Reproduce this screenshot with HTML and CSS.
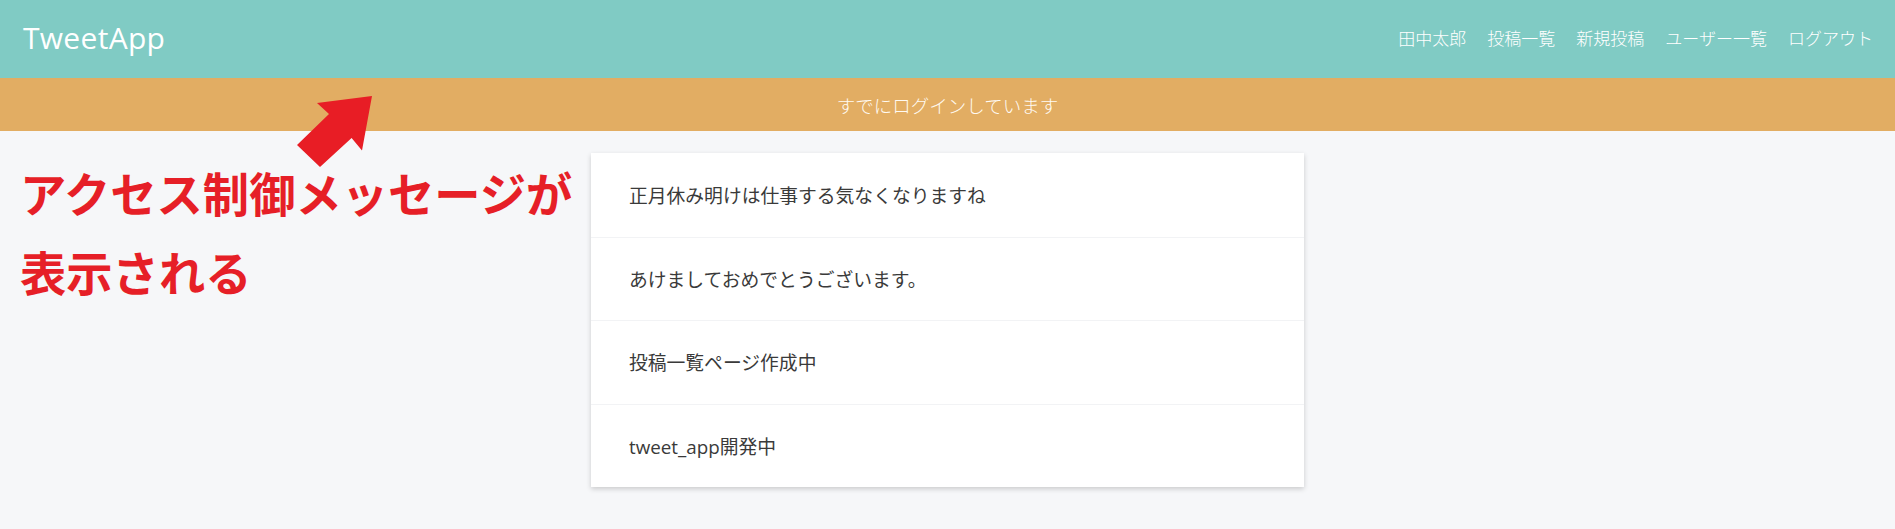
FILE: index.html
```html
<!DOCTYPE html>
<html lang="ja">
<head>
<meta charset="utf-8">
<title>TweetApp</title>
<link rel="stylesheet" href="styles.css">
</head>
<body>
<header class="header">
  <div class="logo">TweetApp</div>
  <nav class="nav">
    <a class="nav-link" href="#">田中太郎</a>
    <a class="nav-link" href="#">投稿一覧</a>
    <a class="nav-link" href="#">新規投稿</a>
    <a class="nav-link" href="#">ユーザー一覧</a>
    <a class="nav-link" href="#">ログアウト</a>
  </nav>
</header>
<div class="flash">すでにログインしています</div>
<main class="main">
  <div class="posts">
    <div class="post">正月休み明けは仕事する気なくなりますね</div>
    <div class="post">あけましておめでとうございます。</div>
    <div class="post">投稿一覧ページ作成中</div>
    <div class="post">tweet_app開発中</div>
  </div>
</main>
<div class="annotation">アクセス制御メッセージが<br>表示される</div>
<svg class="arrow" width="1895" height="529" viewBox="0 0 1895 529">
  <polygon points="372,96 317,103 329,114 297,145 320,167 351.6,138 362,150.6" fill="#e81d25"/>
</svg>
</body>
</html>
```
FILE: styles.css
```css
html, body {
  margin: 0;
  padding: 0;
}
body {
  background: #f6f7f9;
  font-family: "Open Sans", "Noto Sans CJK JP", sans-serif;
  color: #3a3a3a;
  position: relative;
  min-height: 529px;
}
.header {
  height: 78px;
  background: #80cbc4;
  display: flex;
  align-items: center;
  justify-content: space-between;
  padding: 0 22px 0 23px;
  box-sizing: border-box;
}
.logo {
  color: #fff;
  font-size: 30px;
  font-weight: 400;
  letter-spacing: 0.3px;
  margin-top: -4px;
}
.nav {
  display: flex;
  gap: 21px;
}
.nav-link {
  color: #fff;
  text-decoration: none;
  font-size: 17px;
  font-family: "Noto Sans CJK JP", sans-serif;
  font-weight: 300;
  margin-top: -3px;
}
.flash {
  height: 53px;
  background: #e2ad63;
  color: #fffaf2;
  font-family: "Noto Sans CJK JP", sans-serif;
  font-weight: 300;
  font-size: 18.5px;
  display: flex;
  align-items: center;
  justify-content: center;
}
.main {
  padding-top: 22px;
}
.posts {
  width: 713px;
  margin: 0 auto;
  background: #fff;
  box-shadow: 0 2px 5px rgba(0, 0, 0, 0.18);
}
.post {
  height: 83.5px;
  display: flex;
  align-items: center;
  padding-left: 38px;
  font-size: 18.8px;
  font-weight: 400;
  color: #3a3a3a;
  box-sizing: border-box;
}
.post + .post {
  border-top: 1px solid #f2f3f5;
}
.annotation {
  position: absolute;
  left: 20px;
  top: 152px;
  font-family: "Noto Sans CJK JP", sans-serif;
  font-weight: 700;
  font-size: 46.3px;
  line-height: 79px;
  color: #e61f27;
}
.arrow {
  position: absolute;
  left: 0;
  top: 0;
  pointer-events: none;
}
```
